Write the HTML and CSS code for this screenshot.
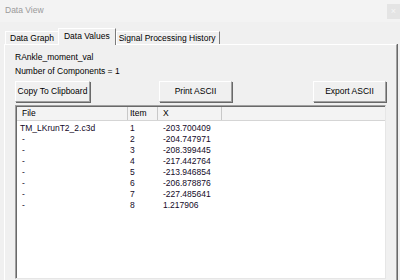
FILE: index.html
```html
<!DOCTYPE html>
<html>
<head>
<meta charset="utf-8">
<link rel="stylesheet" href="styles.css">
</head>
<body>
<div class="window">
  <div class="titlebar">
    <span class="title">Data View</span>
    <span class="close">×</span>
  </div>
  <div class="tabs">
    <div class="tab">Data Graph</div>
    <div class="tab active">Data Values</div>
    <div class="tab last">Signal Processing History</div>
  </div>
  <div class="panel">
    <div class="label">RAnkle_moment_val</div>
    <div class="label">Number of Components = 1</div>
    <div class="buttons">
      <div class="btn btn-copy">Copy To Clipboard</div>
      <div class="btn btn-print">Print ASCII</div>
      <div class="btn btn-export">Export ASCII</div>
    </div>
    <div class="list">
      <div class="header">
        <div class="hcell c-file">File</div>
        <div class="hcell c-item">Item</div>
        <div class="hcell c-x">X</div>
        <div class="hcell c-rest"></div>
      </div>
      <div class="rows">
        <div class="row"><span class="cell f-name">TM_LKrunT2_2.c3d</span><span class="cell i">1</span><span class="cell x">-203.700409</span></div>
        <div class="row"><span class="cell f-dash">-</span><span class="cell i">2</span><span class="cell x">-204.747971</span></div>
        <div class="row"><span class="cell f-dash">-</span><span class="cell i">3</span><span class="cell x">-208.399445</span></div>
        <div class="row"><span class="cell f-dash">-</span><span class="cell i">4</span><span class="cell x">-217.442764</span></div>
        <div class="row"><span class="cell f-dash">-</span><span class="cell i">5</span><span class="cell x">-213.946854</span></div>
        <div class="row"><span class="cell f-dash">-</span><span class="cell i">6</span><span class="cell x">-206.878876</span></div>
        <div class="row"><span class="cell f-dash">-</span><span class="cell i">7</span><span class="cell x">-227.485641</span></div>
        <div class="row"><span class="cell f-dash">-</span><span class="cell i">8</span><span class="cell x">1.217906</span></div>
      </div>
    </div>
  </div>
</div>
</body>
</html>
```
FILE: styles.css
```css
html, body {
  margin: 0;
  padding: 0;
  background: #f0f0f0;
}
body {
  font-family: "Liberation Sans", Arial, sans-serif;
  font-size: 8.5px;
  color: #000;
  width: 400px;
  height: 280px;
  overflow: hidden;
}
.window {
  width: 400px;
  height: 280px;
  display: flex;
  flex-direction: column;
}
.titlebar {
  height: 22px;
  background: #f3f3f3;
  display: flex;
  justify-content: space-between;
  align-items: flex-start;
}
.title {
  color: #9a9a9a;
  margin: 4px 0 0 5px;
  line-height: 12px;
}
.close {
  width: 13px;
  height: 15px;
  margin-top: 4px;
  background: #e4e4e4;
  color: #f6f6f6;
  font-size: 9px;
  line-height: 15px;
  text-align: center;
}
.tabs {
  height: 22px;
  display: flex;
  align-items: flex-end;
  padding-left: 5px;
  position: relative;
  z-index: 1;
}
.tab {
  height: 13px;
  line-height: 12px;
  padding: 0 4px;
  border-top: 1px solid #fff;
  border-left: 1px solid #fff;
  box-sizing: border-box;
  white-space: nowrap;
}
.tab.active {
  height: 17px;
  line-height: 14px;
  padding: 0 5px 0 5px;
  margin-bottom: -1px;
  background: #f0f0f0;
  border-right: 1px solid #7a7a7a;
}
.tab.last {
  padding: 0 3px 0 2px;
  border-right: 1px solid #7a7a7a;
}
.panel {
  flex: 1;
  margin: 0 3px 0 4px;
  border-top: 1px solid #fff;
  border-left: 1px solid #fff;
  border-right: 1px solid #a0a0a0;
  box-shadow: 1px 0 0 #696969;
  padding: 5px 10px 0 10px;
  display: flex;
  flex-direction: column;
}
.label {
  line-height: 14px;
  height: 14px;
}
.buttons {
  display: flex;
  margin-top: 3px;
  height: 21px;
}
.btn {
  box-sizing: border-box;
  height: 21px;
  line-height: 18px;
  text-align: center;
  background: #f0f0f0;
  border-top: 1px solid #fff;
  border-left: 1px solid #fff;
  border-right: 1px solid #a0a0a0;
  border-bottom: 1px solid #a0a0a0;
  box-shadow: 1px 1px 0 #696969;
  white-space: nowrap;
}
.btn-copy { width: 75px; }
.btn-print { width: 73px; margin-left: 69px; }
.btn-export { width: 73px; margin-left: auto; }
.list {
  margin-top: 3px;
  height: 174px;
  background: #fff;
  border-top: 1px solid #a0a0a0;
  border-left: 1px solid #a0a0a0;
  border-right: 1px solid #e6e6e6;
  border-bottom: 1px solid #e6e6e6;
  box-shadow: inset 1px 1px 0 #696969;
  box-sizing: border-box;
  padding: 1px 0 0 1px;
}
.header {
  display: grid;
  grid-template-columns: 111px 30px 64px 1fr;
  height: 14px;
  background: #f3f3f3;
  border-bottom: 1px solid #d5d5d5;
  box-sizing: border-box;
}
.hcell {
  line-height: 13px;
  border-right: 1px solid #c8c8c8;
  box-sizing: border-box;
}
.hcell.c-rest { border-right: 0; }
.c-file { padding-left: 5px; }
.c-item { padding-left: 2px; }
.c-x { padding-left: 5px; }
.rows {
  padding-top: 2px;
}
.row {
  display: grid;
  grid-template-columns: 111px 30px 64px 1fr;
  height: 11px;
  line-height: 11px;
  color: #140a28;
}
.f-name { padding-left: 3px; }
.f-dash { padding-left: 5px; }
.i { padding-left: 2px; }
.x { padding-left: 5px; }
```
